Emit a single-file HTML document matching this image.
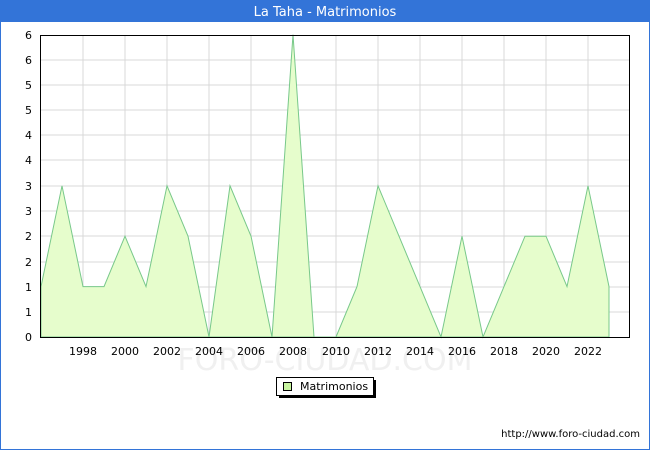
<html><body style="margin:0;width:650px;height:450px;overflow:hidden;background:#fff;font-family:'DejaVu Sans','Liberation Sans',sans-serif">
<svg width="650" height="450" xmlns="http://www.w3.org/2000/svg" style="position:absolute;left:0;top:0">
<rect x="0.5" y="0.5" width="649" height="449" fill="#fff" stroke="#3374d8"/>
<rect x="0" y="0" width="650" height="22" fill="#3374d8"/>
<text x="325" y="16" fill="#fff" font-size="13" text-anchor="middle" font-family="DejaVu Sans,sans-serif">La Taha - Matrimonios</text>
<g stroke="#d8d8d8" stroke-width="1">
<line x1="40" x2="630" y1="312" y2="312"/><line x1="40" x2="630" y1="287" y2="287"/><line x1="40" x2="630" y1="262" y2="262"/><line x1="40" x2="630" y1="236" y2="236"/><line x1="40" x2="630" y1="211" y2="211"/><line x1="40" x2="630" y1="186" y2="186"/><line x1="40" x2="630" y1="160" y2="160"/><line x1="40" x2="630" y1="135" y2="135"/><line x1="40" x2="630" y1="110" y2="110"/><line x1="40" x2="630" y1="85" y2="85"/><line x1="40" x2="630" y1="60" y2="60"/>
<line y1="35" y2="337" x1="83" x2="83"/><line y1="35" y2="337" x1="125" x2="125"/><line y1="35" y2="337" x1="167" x2="167"/><line y1="35" y2="337" x1="209" x2="209"/><line y1="35" y2="337" x1="251" x2="251"/><line y1="35" y2="337" x1="293" x2="293"/><line y1="35" y2="337" x1="336" x2="336"/><line y1="35" y2="337" x1="378" x2="378"/><line y1="35" y2="337" x1="420" x2="420"/><line y1="35" y2="337" x1="462" x2="462"/><line y1="35" y2="337" x1="504" x2="504"/><line y1="35" y2="337" x1="546" x2="546"/><line y1="35" y2="337" x1="588" x2="588"/>
</g>
<polygon fill="#e6fdcc" stroke="#78c88a" stroke-width="1" points="41,337 41,286.6 62,185.8 83,286.6 104,286.6 125,236.2 146,286.6 167,185.8 188,236.2 209,337 230,185.8 251,236.2 272,337 293,34.6 314,337 336,337 357,286.6 378,185.8 399,236.2 420,286.6 441,337 462,236.2 483,337 504,286.6 525,236.2 546,236.2 567,286.6 588,185.8 609,286.6 609,337"/>
<text x="325" y="370" font-size="30" fill="#f0f0f0" text-anchor="middle" font-family="DejaVu Sans">FORO-CIUDAD.COM</text>
<rect x="40.5" y="35.5" width="589" height="302" fill="none" stroke="#000"/>
<g font-size="11" fill="#000" text-anchor="end">
<text x="32" y="341">0</text><text x="32" y="316">1</text><text x="32" y="291">1</text><text x="32" y="266">2</text><text x="32" y="240">2</text><text x="32" y="215">3</text><text x="32" y="190">3</text><text x="32" y="164">4</text><text x="32" y="139">4</text><text x="32" y="114">5</text><text x="32" y="89">5</text><text x="32" y="64">6</text><text x="32" y="39">6</text>
</g>
<g font-size="11" fill="#000" text-anchor="middle">
<text x="83" y="355">1998</text><text x="125" y="355">2000</text><text x="167" y="355">2002</text><text x="209" y="355">2004</text><text x="251" y="355">2006</text><text x="293" y="355">2008</text><text x="336" y="355">2010</text><text x="378" y="355">2012</text><text x="420" y="355">2014</text><text x="462" y="355">2016</text><text x="504" y="355">2018</text><text x="546" y="355">2020</text><text x="588" y="355">2022</text>
</g>
<rect x="279" y="380" width="97" height="18" fill="#000"/>
<rect x="276.5" y="377.5" width="97" height="18" fill="#fff" stroke="#000"/>
<rect x="283.5" y="382.5" width="8" height="8" fill="#c8f5a0" stroke="#000"/>
<text x="300" y="390" font-size="11">Matrimonios</text>
<text x="640" y="437" font-size="10" text-anchor="end">http://www.foro-ciudad.com</text>
</svg>
</body></html>
